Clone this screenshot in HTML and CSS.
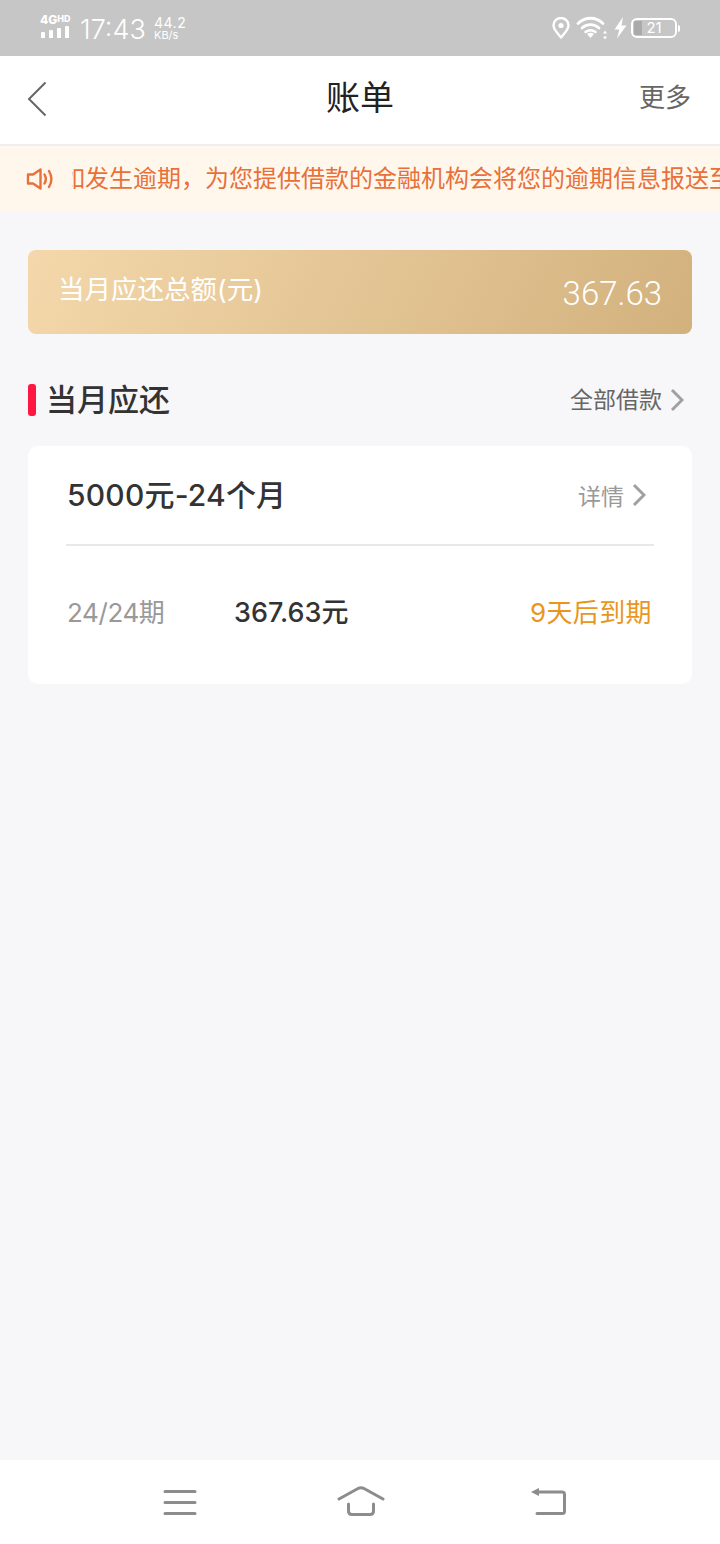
FILE: index.html
```html
<!DOCTYPE html>
<html lang="zh">
<head>
    <meta charset="UTF-8">
    <title>账单</title>
    <link rel="stylesheet" href="styles.css">
</head>
<body>
    <div class="page">
        <div class="status-bar">
            <div class="status-left">
                <div class="signal">
                    <span class="signal-label">4G<sup>HD</sup></span>
                    <div class="signal-bars"><i class="b1"></i><i class="b2"></i><i class="b3"></i><i class="b4"></i></div>
                </div>
                <span class="clock">17:43</span>
                <div class="speed"><span class="speed-num">44.2</span><span class="speed-unit">KB/s</span></div>
            </div>
            <div class="status-right">
                <svg class="pin" width="18" height="22" viewBox="0 0 18 22" fill="none"><path d="M9 20.500C5 15.500 1.500 12.500 1.500 8.500a7.500 7.500 0 0 1 15 0c0 4-3.500 7-7.500 12z" stroke="#fff" stroke-width="2.400" stroke-linejoin="round"/><circle cx="9" cy="8.500" r="2.600" fill="#fff"/></svg>
                <svg class="wifi" width="32" height="24" viewBox="0 0 32 24" fill="none"><path d="M2 7.500C9 .5 20 .5 27 7.500" stroke="#fff" stroke-width="2.800" stroke-linecap="round"/><path d="M6 12C11 7.500 18 7.500 23 12" stroke="#fff" stroke-width="2.800" stroke-linecap="round"/><path d="M9.500 16c3.500-2.500 6.500-2.500 10 0" stroke="#fff" stroke-width="2.600" stroke-linecap="round"/><path d="M11 18c2-1.600 5-1.600 7 0l-3.500 4z" fill="#fff"/><path d="M29 14.500l2 3h-4zM29 23.500l2-3h-4z" fill="#fff"/></svg>
                <svg class="bolt" width="13" height="22" viewBox="0 0 13 22"><path d="M9 0L.5 12.500h4.800L3 21.500 12.500 8.500H7.500z" fill="#fff"/></svg>
                <div class="battery">
                    <div class="battery-body"><div class="battery-fill"></div><span class="battery-num">21</span></div>
                    <div class="battery-tip"></div>
                </div>
            </div>
        </div>

        <div class="top-bar">
            <svg class="back" width="20" height="36" viewBox="0 0 20 36" fill="none"><path d="M18.500 1.500L2 18l16.500 16.500" stroke="#666" stroke-width="2"/></svg>
            <h1 class="title">账单</h1>
            <span class="more">更多</span>
        </div>

        <div class="notice">
            <svg class="horn" width="28" height="24" viewBox="0 0 28 24" fill="none"><path d="M2 7.500h5L14.500 2.500v19L7 16.500H2z" stroke="#e8703a" stroke-width="2.400" stroke-linejoin="round"/><path d="M18.500 7.500c1.800 3 1.800 6 0 9" stroke="#e8703a" stroke-width="2.400" stroke-linecap="round"/><path d="M23 4c3 5 3 11 0 16" stroke="#e8703a" stroke-width="2.400" stroke-linecap="round"/></svg>
            <div class="notice-clip">
                <span class="notice-text">如发生逾期，为您提供借款的金融机构会将您的逾期信息报送至征信机构</span>
            </div>
        </div>

        <div class="main">
            <div class="total-card">
                <span class="total-label">当月应还总额(元)</span>
                <span class="total-value">367.63</span>
            </div>

            <div class="section-head">
                <div class="section-title"><span class="section-mark"></span><span class="section-text">当月应还</span></div>
                <div class="link link-all"><span class="link-text">全部借款</span>
                    <svg width="14" height="24" viewBox="0 0 14 24" fill="none"><path d="M2 2l10 10L2 22" stroke="#a0a0a0" stroke-width="3"/></svg>
                </div>
            </div>

            <div class="loan-card">
                <div class="loan-head">
                    <span class="loan-name">5000元-24个月</span>
                    <div class="link link-detail">详情
                        <svg width="14" height="24" viewBox="0 0 14 24" fill="none"><path d="M2 2l10 10L2 22" stroke="#a0a0a0" stroke-width="3"/></svg>
                    </div>
                </div>
                <div class="loan-row">
                    <span class="loan-term">24/24期</span>
                    <span class="loan-amount">367.63元</span>
                    <span class="loan-due">9天后到期</span>
                </div>
            </div>
        </div>

        <div class="nav-bar">
            <svg width="34" height="28" viewBox="0 0 34 28" fill="none" stroke="#8c8c8c" stroke-width="3" stroke-linecap="round"><path d="M2 3.500h30M2 14.500h30M2 25.500h30"/></svg>
            <svg class="nav-home" width="48" height="32" viewBox="0 0 48 32" fill="none" stroke="#8c8c8c" stroke-width="3" stroke-linecap="round" stroke-linejoin="round"><path d="M2 13L21 2.500q3-1.500 6 0L46 13"/><path d="M11.500 18v7q0 3.500 3.500 3.500h18q3.500 0 3.500-3.500v-7"/></svg>
            <svg width="36" height="30" viewBox="0 0 36 30" fill="none"><path d="M6 5h26q2.500 0 2.500 2.500v17q0 2-2.500 2H7" stroke="#8c8c8c" stroke-width="3" stroke-linecap="round"/><path d="M1 5l8-4v8z" fill="#8c8c8c"/></svg>
        </div>
    </div>
</body>
</html>
```
FILE: styles.css
```css
* {
    box-sizing: border-box;
}
body {
    margin: 0;
    font-family: "Inter", "Noto Sans CJK SC", sans-serif;
    background-color: #f7f7fa;
}
.page {
    width: 720px;
    height: 1544px;
    display: flex;
    flex-direction: column;
    overflow: hidden;
}
.status-bar {
    height: 56px;
    background-color: #c6c6c6;
    color: #fff;
    display: flex;
    justify-content: space-between;
    align-items: center;
    padding: 0 40px;
    flex-shrink: 0;
}
.status-left, .status-right {
    display: flex;
    align-items: center;
}
.wifi {
    margin-left: 6px;
}
.bolt {
    margin-left: 6px;
}
.battery {
    margin-left: 4px;
}
.signal {
    width: 31px;
    margin-right: 9px;
    margin-top: -4px;
}
.signal-label {
    display: block;
    font-size: 12px;
    font-weight: 800;
    line-height: 12px;
    white-space: nowrap;
}
.signal-label sup {
    font-size: 9px;
    line-height: 0;
    vertical-align: 2px;
}
.signal-bars {
    display: flex;
    align-items: flex-end;
    gap: 4px;
    height: 12px;
    padding-left: 1px;
}
.signal-bars i {
    width: 4px;
    background-color: #fff;
    display: block;
    border-radius: 1px 1px 0 0;
}
.b1 { height: 6px; }
.b2 { height: 8px; }
.b3 { height: 10px; }
.b4 { height: 12px; }
.clock {
    font-size: 27px;
    font-weight: 300;
    line-height: 30px;
    width: 74px;
    margin-top: 3px;
}
.speed {
    display: flex;
    flex-direction: column;
}
.speed-num {
    font-size: 14px;
    letter-spacing: 0.5px;
    line-height: 13px;
}
.speed-unit {
    font-size: 11px;
    line-height: 12px;
}
.battery {
    display: flex;
    align-items: center;
}
.battery-body {
    width: 46px;
    height: 20px;
    border: 2px solid #fff;
    border-radius: 6px;
    position: relative;
    overflow: hidden;
    text-align: center;
    font-size: 15px;
    line-height: 16px;
}
.battery-fill {
    position: absolute;
    left: 1px;
    top: 1px;
    bottom: 1px;
    width: 8px;
    background-color: #aaa;
}
.battery-num {
    position: relative;
}
.battery-tip {
    width: 2px;
    height: 7px;
    background-color: #fff;
    border-radius: 0 2px 2px 0;
    margin-left: 1px;
}
.top-bar {
    height: 90px;
    background-color: #fff;
    border-bottom: 2px solid #eeeeee;
    display: flex;
    align-items: center;
    justify-content: space-between;
    padding: 0 29px 0 27px;
    position: relative;
    flex-shrink: 0;
}
.title {
    position: absolute;
    left: 0;
    right: 0;
    top: 18px;
    margin: 0;
    text-align: center;
    font-size: 34px;
    font-weight: 400;
    line-height: 48px;
    color: #222;
}
.more {
    font-size: 26px;
    color: #666;
    margin-top: -4px;
    line-height: 36px;
}
.back {
    margin-top: -2px;
}
.notice {
    height: 66px;
    background-color: #fff7ec;
    display: flex;
    align-items: center;
    padding-left: 26px;
    flex-shrink: 0;
}
.horn {
    margin-right: 18px;
    flex-shrink: 0;
}
.notice-clip {
    flex: 1;
    overflow: hidden;
    white-space: nowrap;
}
.notice-text {
    display: inline-block;
    font-size: 24px;
    line-height: 34px;
    color: #e8703a;
    margin-left: -11px;
}
.main {
    flex: 1;
    padding: 38px 28px 0;
}
.total-card {
    height: 84px;
    border-radius: 8px;
    background: linear-gradient(115deg, #f4d8ab, #d2b17d);
    display: flex;
    justify-content: space-between;
    align-items: center;
    padding: 0 30px;
    color: #fff;
}
.total-label {
    font-size: 26.5px;
    margin-top: -10px;
}
.total-value {
    font-family: "Roboto", sans-serif;
    font-weight: 300;
    font-size: 33px;
    margin-top: 2px;
}
.section-head {
    display: flex;
    justify-content: space-between;
    align-items: center;
    margin-top: 44px;
    height: 44px;
}
.section-title {
    display: flex;
    align-items: center;
    font-size: 31px;
    font-weight: 500;
    color: #333;
}
.section-text {
    padding-bottom: 6px;
}
.section-mark {
    width: 8px;
    height: 32px;
    border-radius: 3px;
    background-color: #ff1744;
    margin-right: 10px;
}
.link {
    display: flex;
    align-items: center;
    gap: 8px;
}
.link-all {
    font-size: 23px;
    color: #666;
    padding-right: 8px;
}
.link-text {
    padding-bottom: 4px;
}
.link-detail {
    font-size: 23px;
    color: #999;
}
.loan-card {
    margin-top: 24px;
    height: 238px;
    background-color: #fff;
    border-radius: 10px;
    padding: 0 38px;
}
.loan-head {
    height: 100px;
    border-bottom: 2px solid #e8e8e8;
    display: flex;
    justify-content: space-between;
    align-items: center;
    padding: 0 8px 0 1px;
}
.loan-name {
    font-size: 30px;
    font-weight: 500;
    letter-spacing: 0.2px;
    color: #333;
    margin-top: -4px;
}
.loan-row {
    display: flex;
    align-items: center;
    height: 128px;
    padding: 0 2px 0 1px;
    font-size: 26px;
}
.loan-term {
    width: 167px;
    color: #999;
    letter-spacing: -0.4px;
}
.loan-amount {
    flex: 1;
    color: #333;
    font-weight: 500;
    font-size: 27px;
}
.loan-due {
    color: #e9961f;
    letter-spacing: 0.4px;
}
.nav-bar {
    height: 84px;
    background-color: #fff;
    display: flex;
    align-items: center;
    padding-left: 163px;
    flex-shrink: 0;
}
.nav-home {
    margin: 0 145px 0 140px;
}
```
